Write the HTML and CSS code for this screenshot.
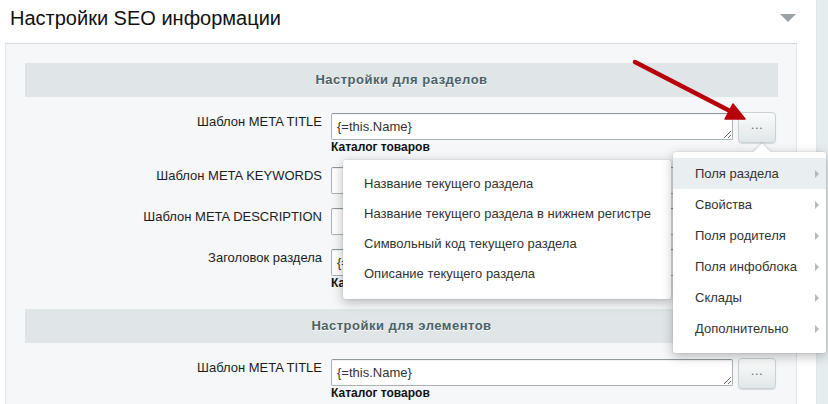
FILE: index.html
```html
<!DOCTYPE html>
<html lang="ru">
<head>
<meta charset="utf-8">
<title>Настройки SEO информации</title>
<link rel="stylesheet" href="styles.css">
</head>
<body>
<div class="page">
  <main class="main">
    <div class="title-row">
      <h2 class="title">Настройки SEO информации</h2>
      <span class="collapse"></span>
    </div>
    <div class="panel">
      <div class="section-head">Настройки для разделов</div>
      <div class="rows">
        <div class="row">
          <label class="lbl">Шаблон META TITLE</label>
          <div class="field">
            <textarea class="ta" readonly>{=this.Name}</textarea>
            <div class="cap">Каталог товаров</div>
          </div>
          <button class="btn">...</button>
        </div>
        <div class="row">
          <label class="lbl">Шаблон META KEYWORDS</label>
          <div class="field"><textarea class="ta" readonly></textarea></div>
          <button class="btn covered">...</button>
        </div>
        <div class="row">
          <label class="lbl">Шаблон META DESCRIPTION</label>
          <div class="field"><textarea class="ta" readonly></textarea></div>
          <button class="btn covered">...</button>
        </div>
        <div class="row">
          <label class="lbl">Заголовок раздела</label>
          <div class="field">
            <textarea class="ta" readonly>{=this.Name}</textarea>
            <div class="cap">Каталог товаров</div>
          </div>
          <button class="btn covered">...</button>
        </div>
      </div>
      <div class="section-head">Настройки для элементов</div>
      <div class="rows">
        <div class="row">
          <label class="lbl">Шаблон META TITLE</label>
          <div class="field">
            <textarea class="ta" readonly>{=this.Name}</textarea>
            <div class="cap">Каталог товаров</div>
          </div>
          <button class="btn">...</button>
        </div>
      </div>
    </div>
  </main>
  <aside class="strip"></aside>
</div>

<ul class="menu menu-sub">
  <li>Название текущего раздела</li>
  <li>Название текущего раздела в нижнем регистре</li>
  <li>Символьный код текущего раздела</li>
  <li>Описание текущего раздела</li>
</ul>

<ul class="menu menu-main">
  <li class="active">Поля раздела<span class="arr"></span></li>
  <li>Свойства<span class="arr"></span></li>
  <li>Поля родителя<span class="arr"></span></li>
  <li>Поля инфоблока<span class="arr"></span></li>
  <li>Склады<span class="arr"></span></li>
  <li>Дополнительно<span class="arr"></span></li>
</ul>

<svg class="arrow" width="828" height="404" viewBox="0 0 828 404">
  <line x1="635" y1="62" x2="730" y2="111" stroke="#b8000d" stroke-width="4.5" stroke-linecap="round"/>
  <polygon points="745,119 725,119 733,104" fill="#b8000d" stroke="#b8000d" stroke-width="1.5" stroke-linejoin="round"/>
</svg>
</body>
</html>
```

FILE: styles.css
```css
* { box-sizing: border-box; }
html, body { margin: 0; padding: 0; }
body {
  width: 828px;
  height: 404px;
  overflow: hidden;
  background: #fff;
  font-family: "Liberation Sans", Arial, sans-serif;
  color: #222;
  position: relative;
}
.page {
  display: flex;
  height: 404px;
}
.main {
  width: 816px;
  background: #fff;
}
.strip {
  flex: 1;
  background: #e6edef;
  border-left: 1px solid #e0e7e9;
}
.title-row {
  display: flex;
  align-items: flex-start;
  justify-content: space-between;
  height: 43px;
  padding-left: 10px;
  padding-right: 20px;
}
.title {
  margin: 6px 0 0;
  font-size: 20px;
  font-weight: normal;
  color: #111;
  line-height: 24px;
}
.collapse {
  margin-top: 14px;
  width: 0;
  height: 0;
  border-left: 8px solid transparent;
  border-right: 8px solid transparent;
  border-top: 8px solid #9aa2a5;
}
.panel {
  margin-left: 5px;
  width: 792px;
  height: 400px;
  background: #f5f7f8;
  border-top: 1px solid #d3d9db;
  border-left: 1px solid #e2e7e9;
  border-right: 1px solid #e2e7e9;
  padding: 19px 18px 0 19px;
}
.section-head {
  height: 34px;
  background: #e0e6e8;
  color: #4b6166;
  font-weight: bold;
  font-size: 13px;
  letter-spacing: 0.5px;
  text-align: center;
  line-height: 34px;
  text-shadow: 0 1px 0 #fff;
}
.rows {
  display: flex;
  flex-direction: column;
  gap: 14px;
  padding: 16px 0 20px;
}
.row {
  display: grid;
  grid-template-columns: 297px 402px 38px;
  column-gap: 8px;
  align-items: start;
}
.row .field { margin-left: 1px; }
.row .btn { margin-left: -2px; margin-top: -1px; margin-bottom: -4px; }
.row .btn.covered { visibility: hidden; }
.lbl {
  text-align: right;
  font-size: 13px;
  color: #1d1d1d;
  padding-top: 1px;
  line-height: 16px;
}
.ta {
  display: block;
  width: 402px;
  height: 27px;
  margin: 0;
  resize: both;
  border: 1px solid #a9b2b6;
  border-top-color: #8f989c;
  border-radius: 2px;
  background: #fff;
  font-family: "Liberation Sans", Arial, sans-serif;
  font-size: 13px;
  color: #333;
  padding: 5px 5px;
  line-height: 15px;
  overflow: hidden;
  box-shadow: inset 0 1px 1px rgba(0,0,0,0.06);
}
.cap {
  font-size: 12px;
  font-weight: bold;
  color: #111;
  line-height: 13px;
  height: 13px;
  padding-top: 1px;
}
.btn {
  width: 38px;
  height: 31px;
  border: 1px solid #c9d1d4;
  border-radius: 4px;
  background: linear-gradient(#fafbfb, #e1e7e9);
  box-shadow: 0 1px 1px rgba(0,0,0,0.12);
  color: #5f6b6f;
  font-family: "Liberation Sans", Arial, sans-serif;
  font-size: 13px;
  font-weight: normal;
  line-height: 18px;
  padding: 0 0 6px;
  letter-spacing: 0.5px;
}
.menu {
  position: absolute;
  margin: 0;
  list-style: none;
  background: #fff;
  border-radius: 3px;
  box-shadow: 0 3px 12px rgba(0,0,0,0.28), 0 0 0 1px rgba(0,0,0,0.04);
  font-size: 13px;
  color: #333;
}
.menu-sub {
  left: 343px;
  top: 160px;
  width: 328px;
  height: 139px;
  padding: 9px 0 10px;
}
.menu-sub li {
  height: 30px;
  line-height: 30px;
  padding-left: 21px;
}
.menu-main {
  left: 673px;
  top: 152px;
  width: 153px;
  height: 201px;
  padding: 6px 0 9px;
}
.menu-main::before {
  content: "";
  position: absolute;
  left: 83px;
  top: -6px;
  width: 12px;
  height: 12px;
  background: #fff;
  transform: rotate(45deg);
  box-shadow: -1px -1px 2px rgba(0,0,0,0.12);
}
.menu-main li {
  position: relative;
  height: 31px;
  line-height: 31px;
  padding-left: 22px;
}
.menu-main li.active { background: #e9eef0; }
.arr {
  position: absolute;
  right: 7px;
  top: 12px;
  width: 0;
  height: 0;
  border-top: 4px solid transparent;
  border-bottom: 4px solid transparent;
  border-left: 4px solid #b3b9bc;
}
.arrow {
  position: absolute;
  left: 0;
  top: 0;
  pointer-events: none;
}
```
